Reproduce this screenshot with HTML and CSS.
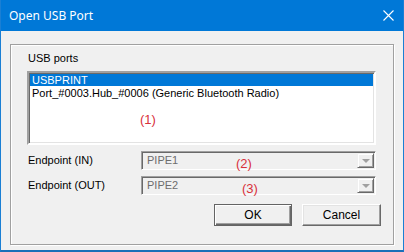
FILE: index.html
```html
<!DOCTYPE html>
<html>
<head>
<meta charset="utf-8"/>
<title>Open USB Port</title>
<link rel="stylesheet" href="styles.css">
</head>
<body>
<div class="g-win">
    <div class="m-title">
        <span class="u-caption">Open USB Port</span>
        <svg class="u-close" width="11" height="11" viewBox="0 0 11 11"><path d="M0.5 0.5L10.5 10.5M10.5 0.5L0.5 10.5" stroke="#fff" stroke-width="1.1" fill="none"/></svg>
    </div>
    <div class="m-body">
        <div class="m-group">
            <p class="u-label">USB ports</p>
            <div class="m-list">
                <p class="item sel">USBPRINT</p>
                <p class="item">Port_#0003.Hub_#0006 (Generic Bluetooth Radio)</p>
                <span class="u-note n1">(1)</span>
            </div>
            <div class="m-row">
                <label>Endpoint (IN)</label>
                <div class="m-combo"><span>PIPE1</span><i class="btn"></i><span class="u-note n2">(2)</span></div>
            </div>
            <div class="m-row">
                <label>Endpoint (OUT)</label>
                <div class="m-combo"><span>PIPE2</span><i class="btn"></i><span class="u-note n3">(3)</span></div>
            </div>
            <div class="m-btns">
                <button class="def">OK</button>
                <button>Cancel</button>
            </div>
        </div>
    </div>
</div>
</body>
</html>
```
FILE: styles.css
```css
/* reset */
html,body,p,div,button,label{margin:0;padding:0;}
body{background:#f0f0f0;font:11px/13px "Liberation Sans",Arial,sans-serif;color:#000;}
.g-win{width:404px;height:252px;box-sizing:border-box;border:1px solid #1a7fd4;border-top:0;border-bottom:2px solid #1a6fb8;background:#f0f0f0;}
.m-title{height:31px;background:#0078d7;display:flex;align-items:center;justify-content:space-between;padding:0 9px 0 8px;}
.u-caption{color:#fff;font:12px "Noto Sans","Open Sans",sans-serif;}
.u-close{display:block;margin-top:0;}
.m-body{padding:13px 9px 0 9px;}
.m-group{height:193px;border:1px solid #a0a0a0;box-shadow:inset 1px 1px #fff,1px 1px #fff;padding:6px 14px 0 16px;}
.u-label{height:20px;line-height:14px;padding-left:1px;}
.m-list{position:relative;width:345px;height:69px;background:#fff;border:2px solid;border-color:#a0a0a0 #fff #fff #a0a0a0;box-shadow:inset 1px 1px #696969,inset -1px -1px #e3e3e3;margin-right:2px;padding-top:1px;}
.m-list .item{height:12px;line-height:12px;padding-left:2px;margin:0 1px;white-space:nowrap;}
.m-list .sel{background:#0078d7;color:#fff;}
.m-list .item+.item{margin-top:1px;}
.u-note{position:absolute;color:#d9303b;font:13px/14px "Liberation Sans",Arial,sans-serif;}
.n1{left:111px;top:40px;}
.n2{left:94px;top:5px;}
.n3{left:100px;top:5px;}
.m-row{display:flex;align-items:center;height:19px;margin-top:6px;}
.m-row+.m-row{margin-top:6px;}
.m-row:first-of-type{margin-top:9px;}
.m-row label{width:114px;padding-left:1px;box-sizing:border-box;}
.m-combo{position:relative;width:235px;height:19px;box-sizing:border-box;border:1px solid;border-color:#a0a0a0 #fff #fff #a0a0a0;box-shadow:inset 1px 1px #696969;display:flex;align-items:center;justify-content:space-between;padding:0 1px 0 5px;color:#6d6d6d;}
.m-combo .btn{width:17px;height:15px;box-sizing:border-box;background:#f0f0f0;border:1px solid;border-color:#f0f0f0 #696969 #696969 #f0f0f0;box-shadow:inset 1px 1px #fff,inset -1px -1px #a0a0a0;display:flex;align-items:center;justify-content:center;}
.m-combo .btn:after{content:"";border-top:4px solid #a0a0a0;border-left:4px solid transparent;border-right:4px solid transparent;}
.m-btns{display:flex;justify-content:flex-end;gap:10px;margin-top:9px;margin-right:-2px;}
.m-btns button{width:79px;height:22px;font:12px "Liberation Sans",Arial,sans-serif;background:#f0f0f0;border:1px solid;border-color:#fff #696969 #696969 #fff;box-shadow:inset -1px -1px #a0a0a0,inset 1px 1px #e3e3e3;}
.m-btns button.def{width:78px;border-color:#646464;box-shadow:inset 1px 1px #fff,inset -1px -1px #696969,inset -2px -2px #a0a0a0;}
```
